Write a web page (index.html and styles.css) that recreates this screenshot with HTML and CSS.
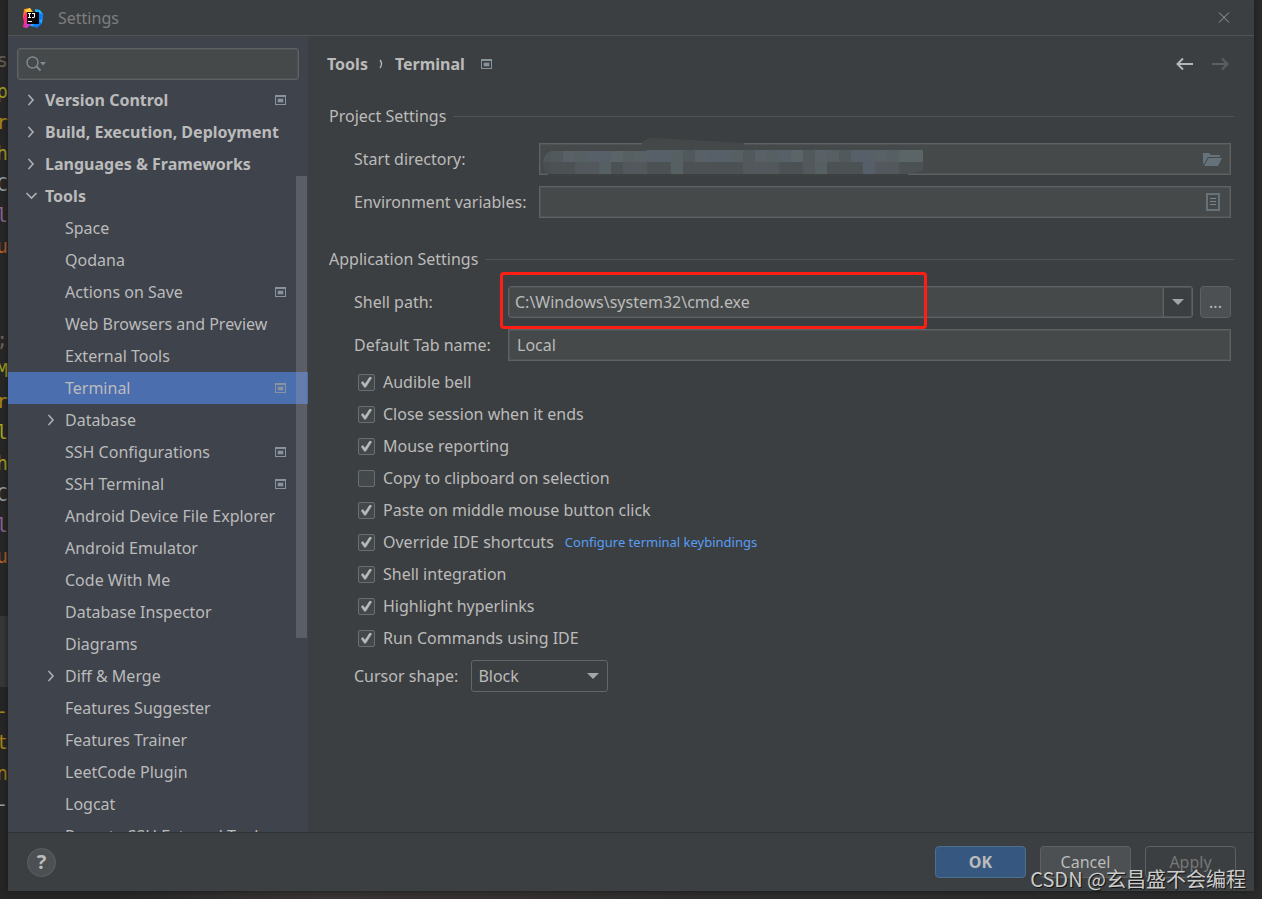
FILE: index.html
```html
<!DOCTYPE html>
<html lang="en">
<head>
<meta charset="utf-8">
<title>Settings</title>
<link rel="stylesheet" href="styles.css">
</head>
<body>
<svg class="defs" aria-hidden="true">
  <symbol id="project" viewBox="0 0 11 10"><path fill="#87939d" fill-rule="evenodd" d="M0 0h11v10H0zM1 2v7h9V2z"/><path fill="#87939d" d="M2.500 3.500h6v4h-6z" opacity=".6"/><path fill="#87939d" d="M3 4h5v3H3z"/></symbol>
  <symbol id="right" viewBox="0 0 12 12"><path d="M3.500 1l4.500 5-4.500 5" fill="none" stroke="#adb0b2" stroke-width="1.600"/></symbol>
  <symbol id="down" viewBox="0 0 12 12"><path d="M1.500 3l5 5 5-5" fill="none" stroke="#adb0b2" stroke-width="1.600"/></symbol>
  <symbol id="triangle" viewBox="0 0 12 6"><path d="M0 0h12L6 6z" fill="#a3a6a8"/></symbol>
</svg>
<pre class="editor" aria-hidden="true"><i class="dim">s</i>
<i class="yellow">p</i>
<i class="gold">r</i>
<i class="yellow">h</i>
<i class="grey">C</i>
<i class="purple">l</i>
<i class="orange">u</i>


<i class="dim">;</i>
<i class="yellow">M</i>
<i class="gold">r</i>
<i class="yellow">l</i>
<i class="yellow">h</i>
<i class="grey">C</i>
<i class="purple">l</i>
<i class="orange">u</i>




<i class="gold">-</i>
<i class="gold">t</i>
<i class="gold">n</i>
<i class="grey">-</i></pre>
<div class="dialog">
  <header class="titlebar">
    <svg class="logo" viewBox="0 0 20 20" aria-hidden="true">
      <path fill="#fe7a28" d="M1 1l6-1 4 5-8 8-3-4z"/>
      <path fill="#fdd835" d="M2 2l5-2 2 4H3z"/>
      <path fill="#fe2d78" d="M0 10l3-6 5 5 3 9-4-1-4 3-3-1 1-5z"/>
      <path fill="#c53bd6" d="M3 14l5 2-4 4-2-1z"/>
      <path fill="#18b8ff" d="M12 1l5 1 3 4-1 9-5 4-7-1 6-8z"/>
      <path fill="#087cfa" d="M14 5l6 1-1 5-3 2 3 2-5 5-4-2z"/>
      <path fill="#0a0508" d="M4 4h12v12H4z"/>
      <path fill="#fff" d="M5 5h3v1H7v3h1v1H5V9h1V6H5zM9 5h3v4l-1 1H9V9h2V6H9zM5 13h4v1H5z"/>
    </svg>
    <span class="caption">Settings</span>
    <button class="plain" aria-label="Close"><svg width="12" height="12" viewBox="0 0 12 12"><path d="M1 .5l10 10M11 .5l-10 10" stroke="#9b9d9e" fill="none"/></svg></button>
  </header>
  <div class="content">
    <aside class="sidebar">
      <div class="search">
        <svg width="20" height="16" viewBox="0 0 20 16" aria-hidden="true"><circle cx="6.500" cy="6.500" r="5.500" fill="none" stroke="#7f8b91" stroke-width="1.400"/><path d="M10.500 10.500l4 4" stroke="#7f8b91" stroke-width="1.800"/><path d="M14 6h6l-3 3.500z" fill="#7f8b91"/></svg>
        <input type="text" aria-label="Search settings">
      </div>
      <nav class="tree">
        <a class="row group" href="#"><svg class="arrow"><use href="#right"/></svg><span>Version Control</span><svg class="mark"><use href="#project"/></svg></a>
        <a class="row group" href="#"><svg class="arrow"><use href="#right"/></svg><span>Build, Execution, Deployment</span></a>
        <a class="row group" href="#"><svg class="arrow"><use href="#right"/></svg><span>Languages &amp; Frameworks</span></a>
        <a class="row group" href="#"><svg class="arrow"><use href="#down"/></svg><span>Tools</span></a>
        <a class="row" href="#"><span>Space</span></a>
        <a class="row" href="#"><span>Qodana</span></a>
        <a class="row" href="#"><span>Actions on Save</span><svg class="mark"><use href="#project"/></svg></a>
        <a class="row" href="#"><span>Web Browsers and Preview</span></a>
        <a class="row" href="#"><span>External Tools</span></a>
        <a class="row selected" href="#"><span>Terminal</span><svg class="mark"><use href="#project"/></svg></a>
        <a class="row branch" href="#"><svg class="arrow"><use href="#right"/></svg><span>Database</span></a>
        <a class="row" href="#"><span>SSH Configurations</span><svg class="mark"><use href="#project"/></svg></a>
        <a class="row" href="#"><span>SSH Terminal</span><svg class="mark"><use href="#project"/></svg></a>
        <a class="row" href="#"><span>Android Device File Explorer</span></a>
        <a class="row" href="#"><span>Android Emulator</span></a>
        <a class="row" href="#"><span>Code With Me</span></a>
        <a class="row" href="#"><span>Database Inspector</span></a>
        <a class="row" href="#"><span>Diagrams</span></a>
        <a class="row branch" href="#"><svg class="arrow"><use href="#right"/></svg><span>Diff &amp; Merge</span></a>
        <a class="row" href="#"><span>Features Suggester</span></a>
        <a class="row" href="#"><span>Features Trainer</span></a>
        <a class="row" href="#"><span>LeetCode Plugin</span></a>
        <a class="row" href="#"><span>Logcat</span></a>
        <a class="row" href="#"><span>Remote SSH External Tools</span></a>
      </nav>
      <div class="thumb"></div>
    </aside>
    <main class="page">
      <div class="crumbs">
        <b>Tools</b><svg width="5" height="10" viewBox="0 0 5 10" aria-hidden="true"><path d="M1 1q3 4 0 8" stroke="#bbb" stroke-width="1.300" fill="none"/></svg><b>Terminal</b><svg class="mark"><use href="#project"/></svg>
        <button class="plain back" aria-label="Back"><svg width="18" height="14" viewBox="0 0 18 14"><path d="M17 7H2M7 1.500L1.500 7 7 12.500" stroke="#b4b6b8" stroke-width="2" fill="none"/></svg></button>
        <button class="plain" aria-label="Forward" disabled><svg width="18" height="14" viewBox="0 0 18 14"><path d="M1 7h15M11 1.500L16.500 7 11 12.500" stroke="#5c5f61" stroke-width="2" fill="none"/></svg></button>
      </div>
      <section>
        <h2>Project Settings</h2>
        <div class="form project">
          <label for="dir">Start directory:</label>
          <div class="field">
            <input id="dir" type="text">
            <svg class="redaction" viewBox="0 0 388 38" aria-hidden="true">
              <path fill="#454849" d="M103 11V5q4-5 12-5l90 5v6z"/>
              <path fill="#3e4142" d="M9 35h360v3H9z"/>
              <path fill="#4d575c" d="M4 24q1-10 9-11v11z"/>
              <path fill="#4a4f51" d="M4 24h8v12q-8-1-8-11z"/>
              <g>
                <path fill="#51595c" d="M12 13h12v11H12zM144 12h12v12h-12zM204 12h12v12h-12zM264 12h12v12h-12zM300 12h12v12h-12z"/>
                <path fill="#596066" d="M24 13h12v11H24zM96 13h12v11H96zM156 12h12v12h-12zM216 12h12v12h-12zM276 12h12v12h-12zM336 12h12v12h-12z"/>
                <path fill="#566063" d="M36 13h12v11H36zM84 13h12v11H84zM132 12h12v12h-12zM192 12h12v12h-12zM228 12h12v12h-12zM288 12h12v12h-12zM348 12h12v12h-12z"/>
                <path fill="#575f69" d="M48 13h24v11H48zM108 12h24v12h-24zM168 12h24v12h-24zM240 12h12v12h-12zM312 12h24v12h-24z"/>
                <path fill="#5b6567" d="M72 13h12v11H72zM252 12h12v12h-12zM360 12h24v12h-24z"/>
                <path fill="#4c5154" d="M12 24h372v9l-14 3H12z"/>
                <path fill="#52585b" d="M36 24h24v12H36zM84 24h24v12H84zM204 24h36v12h-36zM264 24h24v12h-24zM336 24h24v12h-24z"/>
                <path fill="#566063" d="M60 24h12v12H60zM132 24h12v12h-12zM276 24h12v12h-12z"/>
                <path fill="#565e69" d="M324 24h12v12h-12z"/>
              </g>
            </svg>
            <button class="plain inset" aria-label="Browse"><svg width="20" height="15" viewBox="0 0 20 15"><path fill="#66727a" d="M0 1h6l2 2h9v2H5L1 12H0z"/><path fill="#66727a" d="M5.500 6H19l-4 8H1z"/></svg></button>
          </div>
          <label for="env">Environment variables:</label>
          <div class="field">
            <input id="env" type="text">
            <button class="plain inset" aria-label="Edit variables"><svg width="20" height="18" viewBox="0 0 20 18"><path d="M4 1h12v16H4z" fill="none" stroke="#66727a" stroke-width="2"/><path d="M7 5.500h6M7 8.500h6M7 11.500h6" stroke="#7b858b"/></svg></button>
          </div>
        </div>
      </section>
      <section>
        <h2>Application Settings</h2>
        <div class="form application">
          <label for="shell">Shell path:</label>
          <div class="shell">
            <div class="combo">
              <input id="shell" type="text" value="C:\Windows\system32\cmd.exe">
              <button aria-label="Show paths"><svg width="12" height="6"><use href="#triangle"/></svg></button>
            </div>
            <button class="more">...</button>
            <div class="highlight"></div>
          </div>
          <label for="tab">Default Tab name:</label>
          <div class="field"><input id="tab" type="text" value="Local"></div>
        </div>
        <div class="checks">
          <label><input type="checkbox" checked>Audible bell</label>
          <label><input type="checkbox" checked>Close session when it ends</label>
          <label><input type="checkbox" checked>Mouse reporting</label>
          <label><input type="checkbox">Copy to clipboard on selection</label>
          <label><input type="checkbox" checked>Paste on middle mouse button click</label>
          <div class="pair"><label><input type="checkbox" checked>Override IDE shortcuts</label><a href="#">Configure terminal keybindings</a></div>
          <label><input type="checkbox" checked>Shell integration</label>
          <label><input type="checkbox" checked>Highlight hyperlinks</label>
          <label><input type="checkbox" checked>Run Commands using IDE</label>
        </div>
        <div class="cursor">
          <label for="cursor">Cursor shape:</label>
          <div class="select"><select id="cursor"><option>Block</option><option>Underline</option><option>Vertical</option></select><svg width="12" height="6"><use href="#triangle"/></svg></div>
        </div>
      </section>
    </main>
  </div>
  <footer class="footer">
    <button class="help" aria-label="Help">?</button>
    <button class="btn primary">OK</button>
    <button class="btn">Cancel</button>
    <button class="btn" disabled>Apply</button>
  </footer>
</div>
<div class="watermark">CSDN @玄昌盛不会编程</div>
</body>
</html>
```
FILE: styles.css
```css
* { box-sizing: border-box; }
body {
  margin: 0;
  height: 100vh;
  padding: 0 8px 8px;
  overflow: hidden;
  position: relative;
  background: linear-gradient(90deg, #262626 0 110px, #3a3434 330px, #2f2d2d 700px, #2b2b2b);
  color: #bbbbbb;
  font: 16px/24px "Noto Sans", "Open Sans", sans-serif;
}
button, input, select { font: inherit; color: inherit; margin: 0; }
a { color: inherit; text-decoration: none; }
.defs { position: absolute; width: 0; height: 0; }
.mark { width: 11px; height: 10px; flex: none; }

.editor {
  position: absolute;
  inset: 0 auto 0 0;
  width: 8px;
  margin: 0;
  padding-top: 45px;
  overflow: hidden;
  direction: rtl;
  font: 19px/31px "DejaVu Sans Mono", monospace;
  background: linear-gradient(#272727 0 616px, #363738 616px 687px, #262626 687px);
}
.editor i { font-style: normal; }
.dim { color: #6b6257; }
.yellow { color: #a9a51f; }
.gold { color: #a78417; }
.grey { color: #959ca5; }
.purple { color: #8a648f; }
.orange { color: #b5622c; }

.dialog {
  position: relative;
  height: 100%;
  display: flex;
  flex-direction: column;
  background: #3c3f41;
  box-shadow: 0 0 6px #1a1a1a;
}
.titlebar {
  display: flex;
  align-items: center;
  height: 36px;
  flex: none;
  padding: 0 24px 0 15px;
  border-bottom: 1px solid #515151;
}
.logo { width: 20px; height: 20px; }
.caption { margin-left: 15px; flex: 1; color: #7c7e7f; }
.plain { display: flex; padding: 0; border: 0; background: none; }

.content { display: flex; flex: 1; min-height: 0; }
.sidebar {
  position: relative;
  width: 300px;
  flex: none;
  display: flex;
  flex-direction: column;
  background: #3f434c;
}
.search {
  display: flex;
  align-items: center;
  height: 32px;
  flex: none;
  margin: 12px 9px 4px;
  padding-left: 8px;
  border: 1px solid #5f6264;
  border-radius: 3px;
  background: #45494a;
  box-shadow: inset 0 0 0 1px #505355;
}
.search input { flex: 1; min-width: 0; border: 0; background: none; outline: 0; }
.tree { flex: 1; min-height: 0; overflow: hidden; }
.row {
  display: flex;
  align-items: center;
  justify-content: space-between;
  height: 32px;
  padding: 0 22px 0 57px;
  white-space: nowrap;
}
.row .arrow { width: 12px; height: 12px; margin-right: 8px; flex: none; }
.row span { flex: 1; }
.group { padding-left: 17px; font-weight: bold; }
.branch { padding-left: 37px; }
.selected { background: #4b6eaf; }
.thumb {
  position: absolute;
  top: 140px;
  right: 1px;
  width: 11px;
  height: 462px;
  background: #a6a6a647;
}

.page { flex: 1; min-width: 0; padding: 0 20px 0 21px; }
.crumbs { display: flex; align-items: center; height: 56px; padding-right: 5px; gap: 11px; margin-left: -2px; }
.crumbs .mark { margin-left: 5px; }
.crumbs .back { margin: 0 6px 0 auto; }
section { padding-top: 12px; margin-bottom: 17px; }
h2 {
  display: flex;
  align-items: center;
  gap: 7px;
  margin: 0 0 15px;
  font: inherit;
}
h2::after { content: ""; flex: 1; height: 1px; background: #515456; }
.form { display: grid; align-items: center; row-gap: 11px; padding: 0 3px 0 25px; }
.project { grid-template-columns: 185px 1fr; }
.application { grid-template-columns: 154px 1fr; }
.field { position: relative; display: flex; align-items: center; }
.field input {
  width: 100%;
  height: 32px;
  padding: 0 8px;
  border: 1px solid #5f6264;
  background: #45494a;
  box-shadow: inset 0 0 0 1px #505355;
}
.inset { position: absolute; right: 8px; }
.redaction { position: absolute; left: 0; top: -5px; width: 388px; height: 38px; }
.shell { position: relative; display: flex; gap: 7px; }
.combo {
  flex: 1;
  display: flex;
  height: 32px;
  border: 1px solid #5f6264;
  border-radius: 3px;
  box-shadow: inset 0 0 0 1px #505355;
}
.combo input { flex: 1; min-width: 0; padding: 0 6px; border: 0; background: #45494a; box-shadow: inset 0 0 0 1px #505355; }
.combo button {
  width: 29px;
  padding: 0;
  display: grid;
  place-items: center;
  border: 0;
  border-left: 1px solid #5f6264;
  background: none;
}
.more {
  width: 31px;
  height: 32px;
  padding: 0;
  border: 1px solid #5e6163;
  border-radius: 4px;
  background: #4c5052;
}
.highlight {
  position: absolute;
  left: -8px;
  top: -14px;
  width: 427px;
  height: 57px;
  border: 3px solid #ff1e14;
  border-radius: 4px;
  pointer-events: none;
}

.checks { padding: 5px 0 6px 29px; }
.checks label { display: flex; align-items: center; gap: 8px; height: 32px; }
.checks input {
  appearance: none;
  width: 17px;
  height: 17px;
  border: 1px solid #6b6e70;
  border-radius: 2px;
  background: #43494a;
  display: grid;
  place-items: center;
}
.checks input:checked::before {
  content: "";
  width: 11px;
  height: 11px;
  background: #b5b8b9;
  clip-path: polygon(0 56%, 16% 42%, 36% 66%, 80% 0, 100% 12%, 44% 100%, 30% 100%);
}
.pair { display: flex; align-items: center; gap: 11px; }
.pair a { font-size: 13px; color: #589df6; }
.cursor { display: flex; align-items: center; gap: 13px; padding-left: 25px; }
.select { position: relative; display: flex; align-items: center; }
.select select {
  appearance: none;
  width: 137px;
  height: 32px;
  padding: 0 6px;
  border: 1px solid #646769;
  border-radius: 3px;
  background: #3c3f41;
}
.select svg { position: absolute; right: 9px; pointer-events: none; }

.footer {
  display: flex;
  align-items: center;
  gap: 14px;
  height: 59px;
  flex: none;
  padding: 0 18px 0 19px;
  border-top: 1px solid #303234;
}
.help {
  width: 29px;
  height: 29px;
  margin-right: auto;
  padding: 0;
  border: 1px solid #5e6163;
  border-radius: 50%;
  background: #4c5052;
  font-size: 20px;
  font-weight: bold;
  line-height: 24px;
}
.btn {
  width: 91px;
  height: 32px;
  padding: 0;
  border: 1px solid #5e6163;
  border-radius: 4px;
  background: #4c5052;
}
.btn:disabled { background: none; color: #777777; }
.primary { border-color: #4c708c; background: #365880; font-weight: bold; }
.watermark {
  position: absolute;
  right: 16px;
  bottom: 5px;
  font: 20px/30px "Noto Sans CJK SC", sans-serif;
  color: #cccccc;
  text-shadow: 1px 1px 1px #111111;
}
```
